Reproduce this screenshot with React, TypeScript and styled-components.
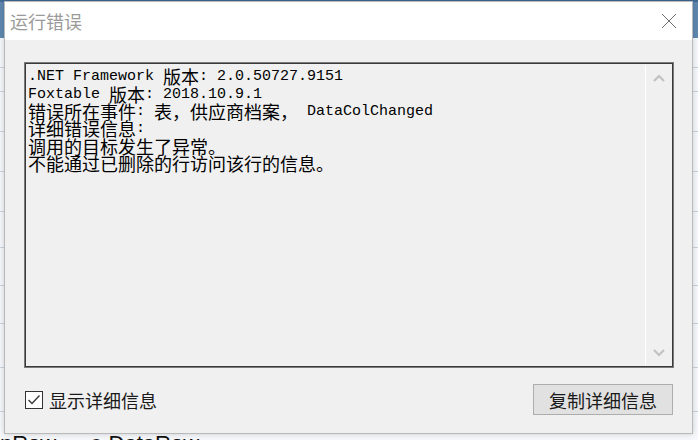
import React from "react";
import styled, { createGlobalStyle } from "styled-components";

const Global = createGlobalStyle`
  html, body { margin: 0; padding: 0; }
  body { width: 698px; height: 440px; overflow: hidden; background: #ffffff; }
`;

const UI_FONT = `"Noto Sans CJK SC", "Noto Sans", sans-serif`;

const Desktop = styled.div`
  position: relative;
  width: 698px;
  height: 440px;
  overflow: hidden;
  display: flex;
  flex-direction: column;
  background: #f6f8fb;
`;

const AppHeader = styled.div`
  height: 38px;
  flex: none;
  background: #5f88b0;
  border-top: 2px solid #3f6a94;
  box-sizing: border-box;
`;

const AppRow = styled.div<{ $h: number }>`
  height: ${(p) => p.$h}px;
  flex: none;
  border-bottom: 1px solid #c7d3df;
  box-sizing: border-box;
`;

const AppBottomText = styled.div`
  flex: none;
  display: flex;
  gap: 34px;
  font-family: "Liberation Sans", sans-serif;
  font-size: 22px;
  line-height: 26px;
  color: #111;
  white-space: pre;
  margin-top: 19px;
`;

const Dialog = styled.div`
  position: absolute;
  left: 4px;
  top: 1px;
  width: 689px;
  height: 433px;
  box-sizing: border-box;
  border: 1px solid #b9b9b9;
  background: #f0f0f0;
  display: flex;
  flex-direction: column;
  box-shadow: 0 0 6px rgba(0, 0, 0, 0.18);
`;

const TitleBar = styled.div`
  height: 38px;
  flex: none;
  background: #ffffff;
  display: flex;
  align-items: center;
  justify-content: space-between;
  padding: 0 15px 0 5px;
`;

const Title = styled.div`
  font-family: ${UI_FONT};
  font-size: 18px;
  color: #9a9a9a;
  line-height: 20px;
`;

const CloseButton = styled.div`
  width: 16px;
  height: 16px;
  display: flex;
`;

const Body = styled.div`
  flex: 1;
  display: flex;
  flex-direction: column;
  padding: 22px 18px 18px 19px;
`;

const TextBox = styled.div`
  height: 306px;
  flex: none;
  box-sizing: border-box;
  border: 1px solid #7a7a7a;
  box-shadow: inset 1px 1px 0 #3a3a3a, inset -1px -1px 0 #3a3a3a;
  background: #f0f0f0;
  display: flex;
`;

const TextArea = styled.div`
  flex: 1;
  padding: 5px 0 0 3px;
`;

const Line = styled.div`
  height: 17.4px;
  display: flex;
  align-items: center;
  white-space: pre;
  color: #000;
`;

const Latin = styled.span`
  font-family: "Courier New", "Nimbus Mono PS", "FreeMono", "Liberation Mono", monospace;
  font-size: 15px;
  line-height: 17px;
  height: 17px;
  display: inline-block;
`;

const Cjk = styled.span`
  font-family: "Noto Sans CJK SC", sans-serif;
  font-size: 18px;
  line-height: 17px;
  height: 17px;
  display: inline-block;
`;

const ScrollBar = styled.div`
  width: 25px;
  flex: none;
  border-left: 1px solid #ffffff;
  margin: 2px 2px 2px 0;
  display: flex;
  flex-direction: column;
  justify-content: space-between;
  align-items: center;
  padding: 9px 0 8px;
`;

const Footer = styled.div`
  margin-top: 16px;
  display: flex;
  align-items: center;
  justify-content: space-between;
`;

const CheckLabel = styled.label`
  display: flex;
  align-items: center;
  gap: 6px;
  font-family: ${UI_FONT};
  font-size: 18px;
  color: #1a1a1a;
  padding-left: 1px;
`;

const CheckBox = styled.div`
  width: 18px;
  height: 18px;
  box-sizing: border-box;
  border: 1px solid #333333;
  background: #ffffff;
  display: flex;
  align-items: center;
  justify-content: center;
`;

const Button = styled.div`
  width: 140px;
  height: 31px;
  box-sizing: border-box;
  border: 1px solid #adadad;
  background: #e1e1e1;
  display: flex;
  align-items: center;
  justify-content: center;
  font-family: ${UI_FONT};
  font-size: 18px;
  color: #1a1a1a;
  margin-right: 1px;
`;

const CJK_RE = /([\u3000-\u303f\u4e00-\u9fff\uff00-\uffef]+)/;

function MixedLine({ text }: { text: string }) {
  const parts = text.split(CJK_RE).filter((p) => p.length > 0);
  return (
    <Line>
      {parts.map((p, i) => (CJK_RE.test(p) ? <Cjk key={i}>{p}</Cjk> : <Latin key={i}>{p}</Latin>))}
    </Line>
  );
}

const lines = [
  ".NET Framework 版本: 2.0.50727.9151",
  "Foxtable 版本: 2018.10.9.1",
  "错误所在事件: 表，供应商档案， DataColChanged",
  "详细错误信息:",
  "调用的目标发生了异常。",
  "不能通过已删除的行访问该行的信息。",
];

const Chevron = ({ up }: { up?: boolean }) => (
  <svg width="12" height="8" viewBox="0 0 12 8">
    <path
      d={up ? "M1 7 L6 2 L11 7" : "M1 1 L6 6 L11 1"}
      fill="none"
      stroke="#c2c2c2"
      strokeWidth="2.2"
    />
  </svg>
);

export default function App() {
  return (
    <>
      <Global />
      <Desktop>
        <AppHeader />
        <AppRow $h={30} />
        <AppRow $h={24} />
        <AppRow $h={40} />
        <AppRow $h={40} />
        <AppRow $h={40} />
        <AppRow $h={36} />
        <AppRow $h={38} />
        <AppRow $h={38} />
        <AppRow $h={44} />
        <AppRow $h={44} />
        <AppBottomText>
          <span>nRow</span>
          <span>e DataRow</span>
        </AppBottomText>
        <Dialog>
          <TitleBar>
            <Title>运行错误</Title>
            <CloseButton>
              <svg width="16" height="16" viewBox="0 0 16 16">
                <path d="M1 1 L15 15 M15 1 L1 15" stroke="#6f6f6f" strokeWidth="1" fill="none" />
              </svg>
            </CloseButton>
          </TitleBar>
          <Body>
            <TextBox>
              <TextArea>
                {lines.map((l, i) => (
                  <MixedLine key={i} text={l} />
                ))}
              </TextArea>
              <ScrollBar>
                <Chevron up />
                <Chevron />
              </ScrollBar>
            </TextBox>
            <Footer>
              <CheckLabel>
                <CheckBox>
                  <svg width="14" height="12" viewBox="0 0 14 12">
                    <path d="M1.5 6 L5 9.5 L12.5 1.5" fill="none" stroke="#3a3a3a" strokeWidth="1.4" />
                  </svg>
                </CheckBox>
                显示详细信息
              </CheckLabel>
              <Button>复制详细信息</Button>
            </Footer>
          </Body>
        </Dialog>
      </Desktop>
    </>
  );
}
